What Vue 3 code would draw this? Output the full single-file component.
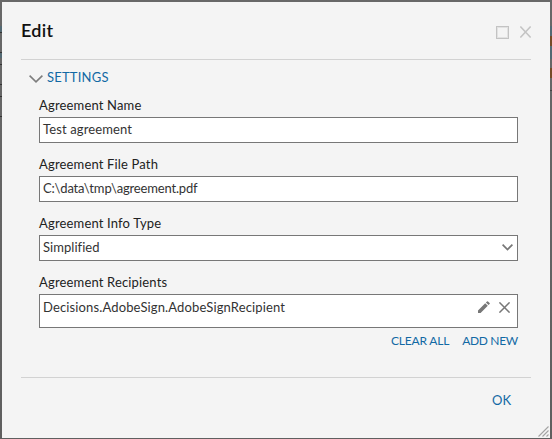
<script setup>
import { ref } from 'vue'

const fields = ref([
  { label: 'Agreement Name', value: 'Test agreement', key: 'name' },
  { label: 'Agreement File Path', value: 'C:\\data\\tmp\\agreement.pdf', key: 'path' },
  { label: 'Agreement Info Type', value: 'Simplified', key: 'type', select: true },
])
const recipients = ref(['Decisions.AdobeSign.AdobeSignRecipient'])
</script>

<template>
  <div class="backdrop">
    <section class="dialog">
      <header class="header">
        <h1 class="title">Edit</h1>
        <div class="window-tools">
          <svg width="13" height="13" viewBox="0 0 13 13"><rect x="0.5" y="0.5" width="12" height="12" fill="none" stroke="#c3c3c3" /><rect x="1.5" y="1.5" width="10" height="10" fill="none" stroke="#e2e2e2" /></svg>
          <svg width="11" height="12" viewBox="0 0 11 12"><path d="M.4.5l10.2 11M10.6.5L.4 11.5" fill="none" stroke="#c4c4c4" stroke-width="1.5" /></svg>
        </div>
      </header>

      <main class="body">
        <div class="group">
          <svg width="14" height="8" viewBox="0 0 14 8"><path d="M.6.7L7 6.8 13.4.7" fill="none" stroke="#7d7d7d" stroke-width="1.6" /></svg>
          <span class="group-name">SETTINGS</span>
        </div>

        <div v-for="f in fields" :key="f.key" class="field">
          <label class="label">{{ f.label }}</label>
          <div class="box">
            <span class="value" :class="'value-' + f.key">{{ f.value }}</span>
            <svg v-if="f.select" class="caret" width="11" height="7" viewBox="0 0 11 7"><path d="M.6.6l4.9 4.9L10.4.6" fill="none" stroke="#777" stroke-width="1.7" /></svg>
          </div>
        </div>

        <div class="field">
          <label class="label">Agreement Recipients</label>
          <div class="box list">
            <div v-for="r in recipients" :key="r" class="item">
              <span class="value value-recipient">{{ r }}</span>
              <span class="item-tools">
                <svg width="12" height="12" viewBox="0 0 12 12"><path d="M0 12V9.4L7.2 2.2l2.6 2.6L2.6 12zM7.9 1.5L9 .4q.5-.5 1 0L11.6 2q.5.5 0 1l-1.1 1.1z" fill="#777" /></svg>
                <svg width="11" height="11" viewBox="0 0 11 11"><path d="M.4.4l10.2 10.2M10.6.4L.4 10.6" fill="none" stroke="#777" stroke-width="1.5" /></svg>
              </span>
            </div>
          </div>
        </div>

        <div class="links">
          <span class="link clear">CLEAR ALL</span>
          <span class="link add">ADD NEW</span>
        </div>
      </main>

      <footer class="footer"><span class="ok">OK</span></footer>
      <svg class="grip" width="11" height="11" viewBox="0 0 11 11"><path d="M.5 10.5l10-10M4.5 10.5l6-6M8.5 10.5l2-2" fill="none" stroke="#a4a4a4" stroke-width="1.1" /></svg>
    </section>
  </div>
</template>

<style>
body { margin: 0; overflow: hidden; }
</style>

<style scoped>
* { box-sizing: border-box; }
/* Dimmed page content stays visible along both edges of the dialog. */
.backdrop {
  width: 552px; height: 439px; padding: 2px 2px 1px;
  background:
    linear-gradient(transparent 26px, #536973 26px 32px, #333 32px 33px, transparent 33px 52px, #333 52px 53px, #536973 53px 58px, transparent 58px 64px, #333 64px 65px, transparent 65px 84px, #333 84px 85px, transparent 85px 96px, #333 96px 97px, transparent 97px 116px, #333 116px 117px, transparent 117px) left top / 2px 100% no-repeat,
    linear-gradient(transparent 26px, #536973 26px 36px, #754b27 36px 46px, #536973 46px 59px, transparent 59px 68px, #754b27 68px 78px, transparent 78px 90px, #444 90px 91px, transparent 91px) right top / 2px 100% no-repeat,
    linear-gradient(#686868, #5f5f5f);
  font-family: Lato, "Noto Sans", sans-serif; font-size: 13px; line-height: 18px; color: #222;
}
.dialog { position: relative; display: flex; flex-direction: column; height: 436px; padding: 0 19px; background: #f4f4f4; }
.header { display: flex; justify-content: space-between; height: 58px; border-bottom: 1px solid #d2d2d2; }
.title { margin: 16px 0 0; font-size: 18px; line-height: 24px; font-weight: 600; color: #111; letter-spacing: .3px; }
.window-tools { display: flex; gap: 11px; padding-top: 24px; }
.body { flex: none; height: 318px; padding: 7px 13px 0 18px; border-bottom: 1px solid #d2d2d2; }
.group { display: flex; align-items: center; gap: 4px; height: 19px; margin-left: -10px; color: #1269a4; }
.group-name { letter-spacing: .2px; }
.group svg { margin-top: 4px; }
.field { height: 59px; padding-top: 10px; }
.label { display: block; height: 21px; white-space: nowrap; letter-spacing: .16px; }
.box { display: flex; align-items: center; justify-content: space-between; height: 26px; padding: 0 4px 2px 3px; border: 1px solid #777; background: #fff; white-space: nowrap; }
.value { color: #333; }
.value-name { letter-spacing: .12px; }
.value-path { letter-spacing: -.17px; }
.value-type { letter-spacing: .05px; }
.value-recipient { letter-spacing: .14px; }
.list { display: block; height: 34px; padding: 3px 7px 0 3px; }
.item { display: flex; justify-content: space-between; align-items: center; height: 18px; }
.item-tools { display: flex; gap: 9px; align-items: center; }
.links { display: flex; justify-content: flex-end; gap: 13px; margin-top: 11px; font-size: 12px; line-height: 16px; letter-spacing: -.2px; color: #1269a4; }
.add { letter-spacing: -.3px; }
.footer { display: flex; justify-content: flex-end; padding: 13px 20px 0 0; color: #1269a4; }
.grip { position: absolute; right: 1px; bottom: 1px; }
</style>
